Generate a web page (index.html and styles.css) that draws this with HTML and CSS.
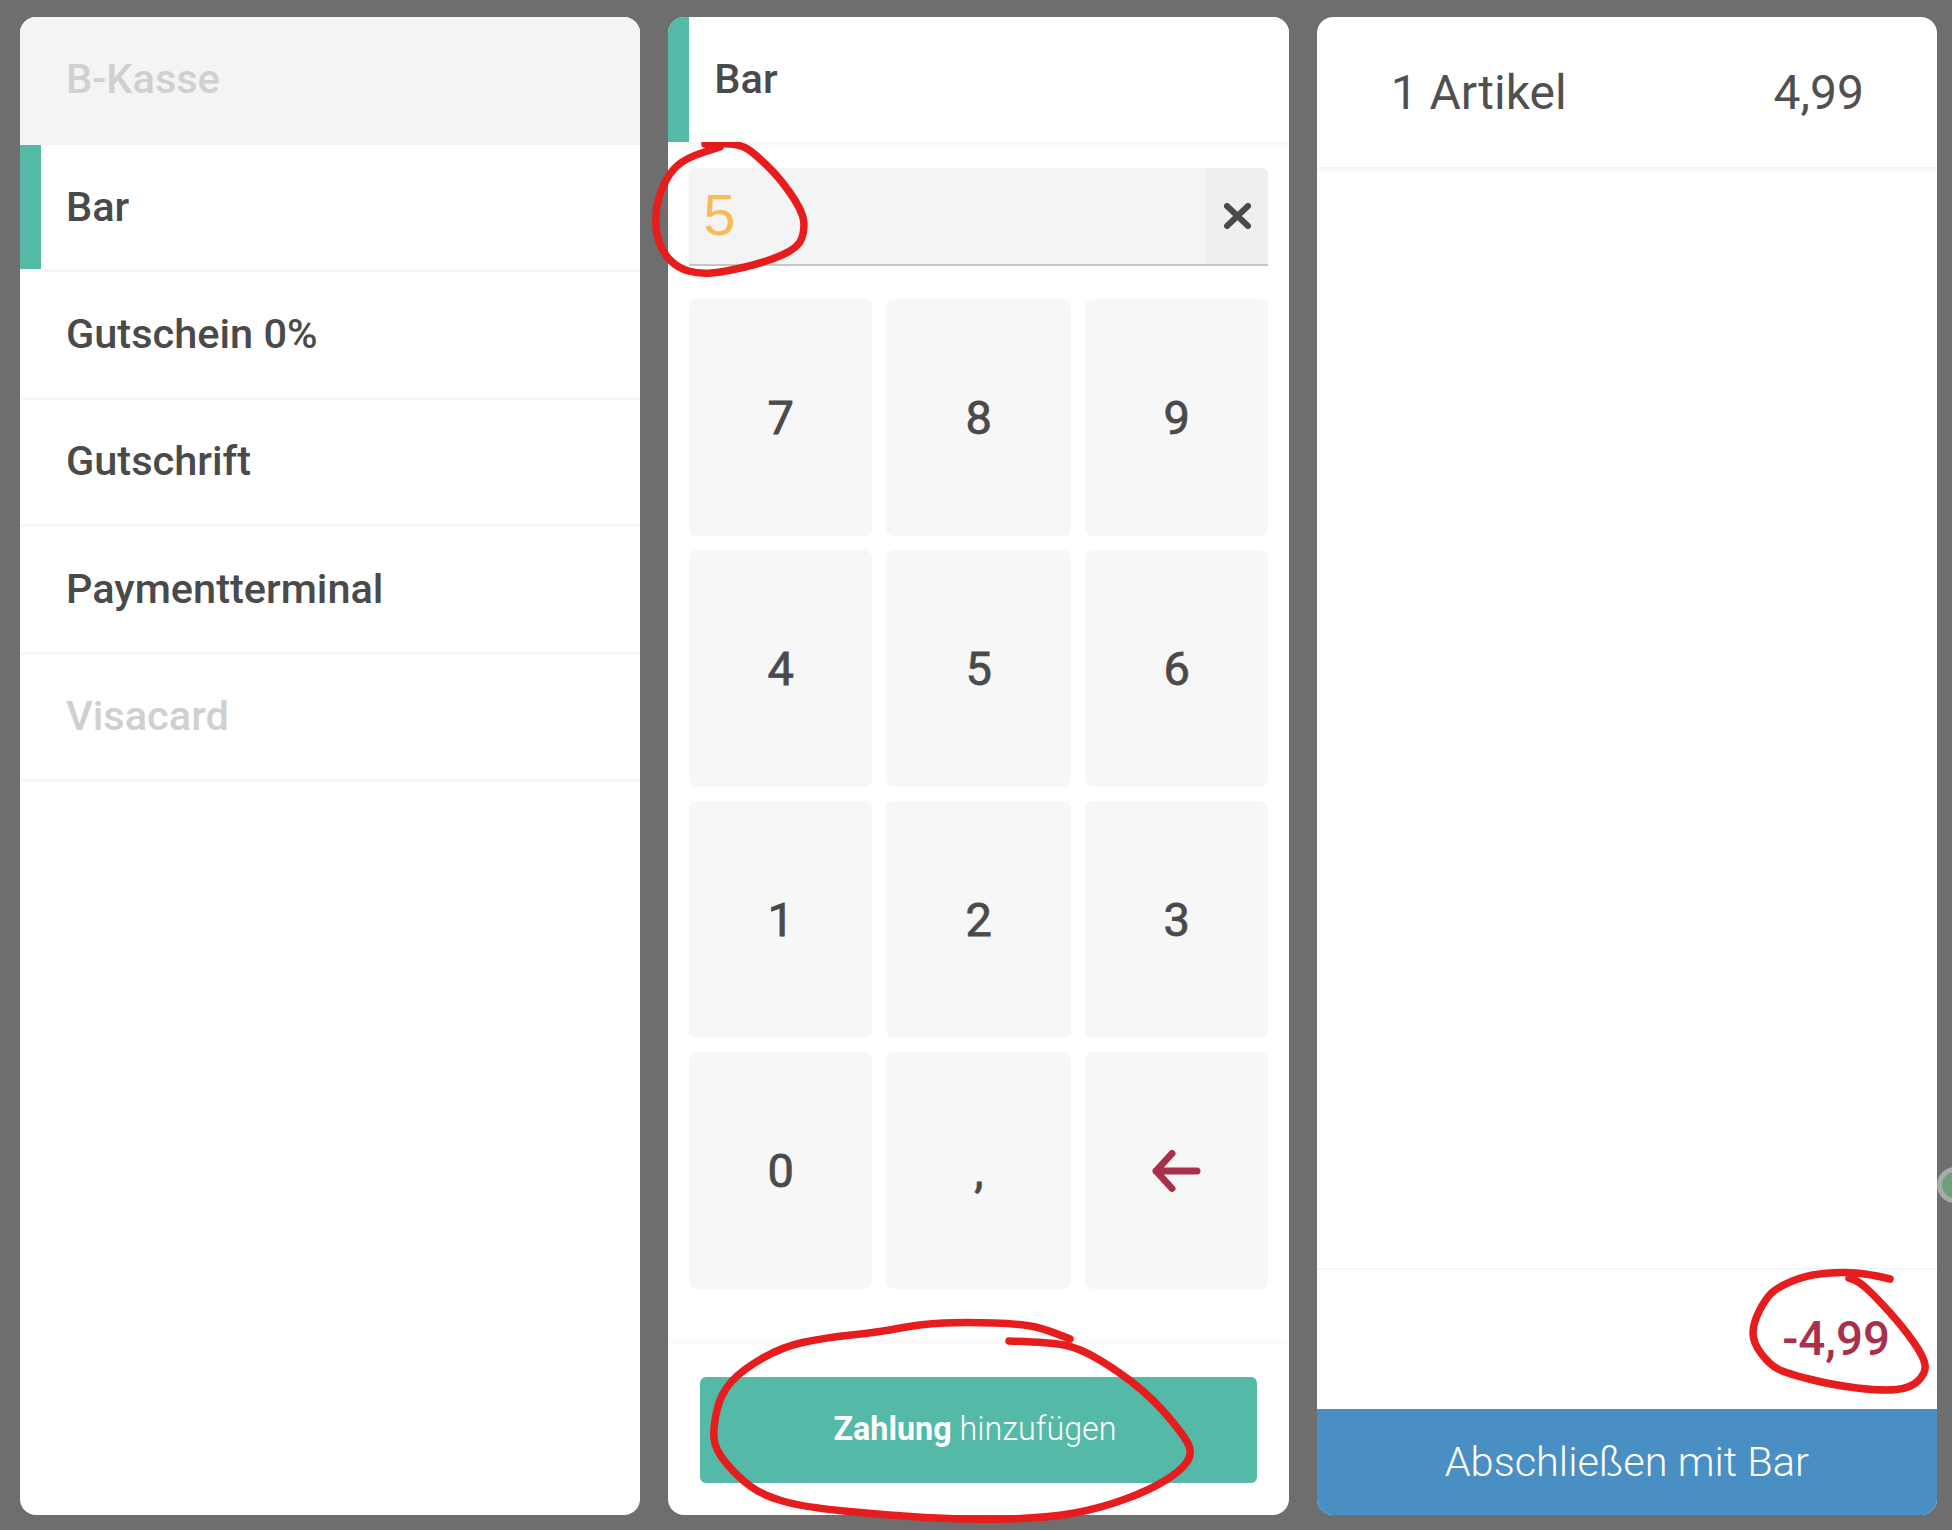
FILE: index.html
```html
<!DOCTYPE html>
<html lang="de">
<head>
<meta charset="utf-8">
<title>Kasse</title>
<link rel="stylesheet" href="styles.css">
</head>
<body>
<main class="screen">
  <section class="panel">
    <div class="method-title">B-Kasse</div>
    <div class="method active">Bar</div>
    <div class="method">Gutschein 0%</div>
    <div class="method">Gutschrift</div>
    <div class="method">Paymentterminal</div>
    <div class="method disabled">Visacard</div>
  </section>

  <section class="panel">
    <header class="pay-header">Bar</header>
    <div class="pay-body">
      <div class="amount">
        <span class="amount-value">5</span>
        <button class="amount-clear" type="button" aria-label="Löschen">
          <svg class="icon-x" viewBox="0 0 27 26"><path d="M3 3 24 23M24 3 3 23"/></svg>
        </button>
      </div>
      <div class="keypad">
        <button class="key" type="button">7</button>
        <button class="key" type="button">8</button>
        <button class="key" type="button">9</button>
        <button class="key" type="button">4</button>
        <button class="key" type="button">5</button>
        <button class="key" type="button">6</button>
        <button class="key" type="button">1</button>
        <button class="key" type="button">2</button>
        <button class="key" type="button">3</button>
        <button class="key" type="button">0</button>
        <button class="key" type="button">,</button>
        <button class="key" type="button" aria-label="Zurück">
          <svg class="icon-back" viewBox="0 0 48 42"><path d="M4 21H45M20 3.5 4 21 20 38.5"/></svg>
        </button>
      </div>
    </div>
    <footer class="pay-footer">
      <button class="add-btn" type="button"><b>Zahlung</b> hinzufügen</button>
    </footer>
  </section>

  <section class="panel">
    <header class="sum-header"><span>1 Artikel</span><span>4,99</span></header>
    <div class="sum-space"></div>
    <div class="sum-total">-4,99</div>
    <button class="finish-btn" type="button">Abschließen mit Bar</button>
  </section>
</main>

<div class="edge-dot"></div>

<svg class="scribble" viewBox="0 0 1952 1530" aria-hidden="true">
  <path d="M705 144Q720 143 730.5 144Q741 145 747.5 149Q754 153 766.5 165Q779 177 790.5 193.5Q802 210 803.5 220Q805 230 801.5 239Q798 248 782 255Q766 262 745 267Q724 272 711.5 273Q699 274 688.5 271Q678 268 670.5 260.5Q663 253 659 241.5Q655 230 656 215Q657 200 663 186.5Q669 173 677.5 165.5Q686 158 703 152.5L720 147"/>
  <path d="M1009 1341Q1048 1342 1064 1345Q1080 1348 1100.5 1360.5Q1121 1373 1137.5 1386.5Q1154 1400 1168 1416.5Q1182 1433 1187.5 1442.5Q1193 1452 1187.5 1461Q1182 1470 1166 1480Q1150 1490 1125.5 1499Q1101 1508 1074.5 1513Q1048 1518 1007 1519Q966 1520 925 1517.5Q884 1515 843.5 1511Q803 1507 782.5 1501Q762 1495 750 1486Q738 1477 726.5 1463.5Q715 1450 714 1438.5Q713 1427 717 1410Q721 1393 731.5 1381.5Q742 1370 762 1358.5Q782 1347 802.5 1342.5Q823 1338 851.5 1335Q880 1332 900.5 1328Q921 1324 943.5 1323Q966 1322 994.5 1323Q1023 1324 1035.5 1327Q1048 1330 1070 1339"/>
  <path d="M1890 1279Q1870 1274 1855.5 1273Q1841 1272 1824 1273.5Q1807 1275 1792.5 1281Q1778 1287 1772 1292.5Q1766 1298 1759.5 1310.5Q1753 1323 1753 1333Q1753 1343 1761.5 1354Q1770 1365 1778 1369Q1786 1373 1809 1379Q1832 1385 1857 1388Q1882 1391 1896.5 1389.5Q1911 1388 1918.5 1380.5Q1926 1373 1925 1365Q1924 1357 1913.5 1342Q1903 1327 1888.5 1311Q1874 1295 1865.5 1287.5Q1857 1280 1849 1278"/>
</svg>
</body>
</html>
```

FILE: styles.css
```css
* { box-sizing: border-box; }

html, body {
  margin: 0;
  height: 1530px;
  overflow: hidden;
  background: #6e6e6e;
}

body {
  position: relative;
  font-family: Roboto, "Liberation Sans", sans-serif;
  color: #4a4a4a;
}

button {
  font-family: inherit;
  border: 0;
  padding: 0;
  margin: 0;
}

.screen {
  display: grid;
  grid-template-columns: repeat(3, 1fr);
  gap: 28px;
  height: 1530px;
  padding: 17px 15px 15px 20px;
}

.panel {
  display: flex;
  flex-direction: column;
  background: #fff;
  border-radius: 16px;
  overflow: hidden;
  min-width: 0;
}

/* Left column */
.method-title,
.method {
  display: flex;
  align-items: center;
  padding-left: 46px;
  padding-bottom: 2px;
  font-size: 41.5px;
  font-weight: 500;
}

.method-title {
  height: 126px;
  margin-bottom: 2px;
  padding-bottom: 3px;
  background: #f4f4f4;
  color: #d0d0d0;
  box-shadow: 0 2px 0 #f4f4f4;
}

.method {
  height: 127.4px;
  border-bottom: 3px solid #f7f7f7;
}

.method.active { box-shadow: inset 21px 0 0 #54b9a6; }
.method.disabled { color: #d0d0d0; }

/* Middle column */
.pay-header {
  position: relative;
  z-index: 1;
  display: flex;
  align-items: center;
  flex: none;
  height: 125px;
  padding-left: 25px;
  padding-bottom: 2px;
  border-left: 21px solid #54b9a6;
  background: #fff;
  box-shadow: 0 3px 6px rgba(0, 0, 0, .05);
  font-size: 41.5px;
  font-weight: 500;
  background-clip: padding-box;
}

.pay-body {
  flex: 1;
  padding: 26px 21px 0;
}

.amount {
  display: flex;
  justify-content: space-between;
  align-items: stretch;
  height: 98px;
  background: #f4f4f4;
  border-bottom: 2px solid #c6c6c6;
  border-radius: 6px 6px 0 0;
}

.amount-value {
  align-self: center;
  padding-left: 14px;
  padding-bottom: 2px;
  font-family: "Liberation Sans", Arial, sans-serif;
  font-size: 58px;
  line-height: 1;
  color: #f6bc5c;
}

.amount-clear {
  display: flex;
  align-items: center;
  justify-content: center;
  width: 62px;
  padding-left: 2px;
  background: #efefef;
  border-radius: 6px;
}

.icon-x {
  width: 27px;
  height: 26px;
  fill: none;
  stroke: #4a4a4a;
  stroke-width: 6;
  stroke-linecap: round;
}

.keypad {
  display: grid;
  grid-template-columns: 183px 185px 183px;
  grid-auto-rows: 237px;
  gap: 14px;
  margin-top: 33px;
}

.key {
  display: flex;
  align-items: center;
  justify-content: center;
  background: #f7f7f7;
  border-radius: 8px;
  color: #4a4a4a;
  font-size: 47px;
  font-weight: 400;
  -webkit-text-stroke: .8px #4a4a4a;
}

.icon-back {
  width: 48px;
  height: 42px;
  margin-right: 2px;
  overflow: visible;
  fill: none;
  stroke: #a8304c;
  stroke-width: 7;
  stroke-linecap: round;
  stroke-linejoin: round;
}

.pay-footer {
  flex: none;
  height: 171px;
  padding: 33px 32px 0;
  box-shadow: 0 -3px 6px rgba(0, 0, 0, .03);
}

.add-btn {
  display: block;
  width: 100%;
  height: 106px;
  padding-bottom: 2px;
  padding-right: 7px;
  background: #54b9a6;
  border-radius: 6px;
  color: #fff;
  font-size: 32.3px;
  font-weight: 300;
}

.add-btn b { font-weight: 700; }

/* Right column */
.sum-header {
  display: flex;
  justify-content: space-between;
  align-items: center;
  flex: none;
  height: 150px;
  padding: 0 73px 0 74px;
  font-size: 48px;
  font-weight: 400;
  color: #505050;
  box-shadow: 0 3px 6px rgba(0, 0, 0, .06);
}

.sum-space { flex: 1; }

.sum-total {
  flex: none;
  height: 141px;
  padding-right: 47px;
  display: flex;
  align-items: center;
  justify-content: flex-end;
  padding-bottom: 2px;
  border-top: 2px solid #f5f5f5;
  font-size: 47.5px;
  font-weight: 500;
  color: #a8304c;
}

.finish-btn {
  flex: none;
  height: 106px;
  padding-bottom: 2px;
  background: #4a8fc3;
  color: #fff;
  font-size: 41.5px;
  font-weight: 300;
}

/* Things lying over the page */
.edge-dot {
  position: absolute;
  left: 1937px;
  top: 1167px;
  width: 36px;
  height: 36px;
  border: 5px solid #aaa;
  border-radius: 50%;
  background: #6f9f78;
}

.scribble {
  position: absolute;
  inset: 0;
  width: 1952px;
  height: 1530px;
  fill: none;
  stroke: #e71c1c;
  stroke-width: 7.5;
  stroke-linecap: round;
  stroke-linejoin: round;
  pointer-events: none;
}
```
